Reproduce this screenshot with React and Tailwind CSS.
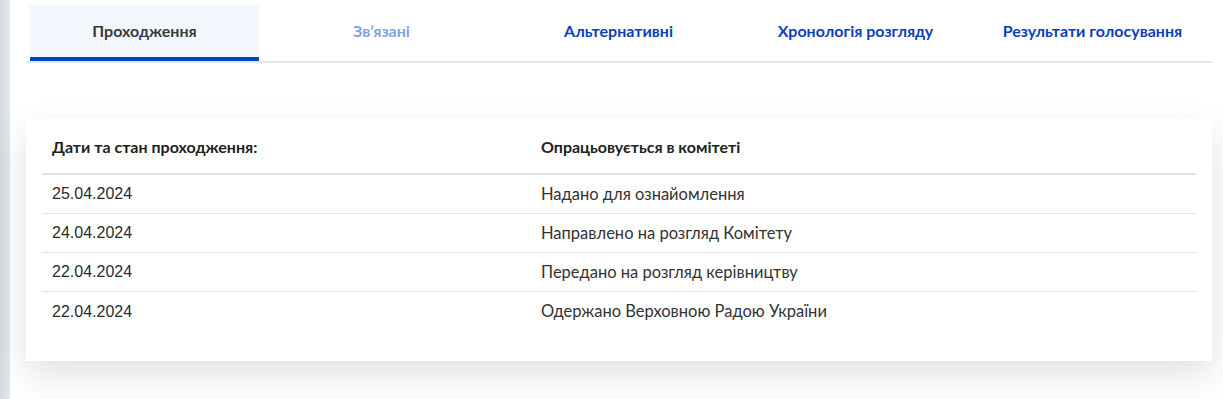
import React from "react";

const tabs = [
  { label: "Проходження", state: "active" },
  { label: "Зв’язані", state: "disabled" },
  { label: "Альтернативні", state: "link" },
  { label: "Хронологія розгляду", state: "link" },
  { label: "Результати голосування", state: "link" },
];

const rows = [
  { date: "25.04.2024", status: "Надано для ознайомлення" },
  { date: "24.04.2024", status: "Направлено на розгляд Комітету" },
  { date: "22.04.2024", status: "Передано на розгляд керівництву" },
  { date: "22.04.2024", status: "Одержано Верховною Радою України" },
];

export default function App() {
  return (
    <div className="flex min-h-[399px] w-full bg-white font-['Lato','Noto_Sans',sans-serif]">
      {/* left page edge */}
      <div className="w-[10px] shrink-0 bg-gradient-to-r from-[#d5d9dd] to-[#e4e7ea]" />

      <div className="flex-1 pt-[5px] pl-[16px] pr-[11px]">
        {/* tabs */}
        <div className="flex gap-[8px] border-b-2 border-[#e5e5ec] pl-[4px]">
          {tabs.map((t) => (
            <div
              key={t.label}
              className={
                "flex h-[56px] w-[229px] items-center justify-center text-[16px] font-bold " +
                (t.state === "active"
                  ? "border-b-4 border-[#0047c8] bg-[#f2f6fd] text-[#3a3a3a]"
                  : t.state === "disabled"
                  ? "pb-[4px] text-[#7ea3df]"
                  : "pb-[4px] text-[#0c40b8]")
              }
            >
              {t.label}
            </div>
          ))}
        </div>

        {/* card */}
        <div className="mt-[56px] bg-white px-[16px] pb-[30px] shadow-[0_14px_34px_rgba(0,0,0,0.12)]">
          <div className="flex h-[56px] items-center border-b-2 border-[#e3e3e8] pt-[1px] text-[16px] font-bold text-[#222]">
            <div className="w-[499px] pl-[10px]">Дати та стан проходження:</div>
            <div>Опрацьовується в комітеті</div>
          </div>
          {rows.map((r, i) => (
            <div
              key={i}
              className={
                "flex h-[39px] items-center text-[16.5px] text-[#333] " +
                (i < rows.length - 1 ? "border-b border-[#e3e3e8]" : "")
              }
            >
              <div className="w-[499px] pl-[10px] font-['Liberation_Sans',Arial,sans-serif] text-[16px] text-[#2b2b2b]">
                {r.date}
              </div>
              <div>{r.status}</div>
            </div>
          ))}
        </div>
      </div>
    </div>
  );
}
